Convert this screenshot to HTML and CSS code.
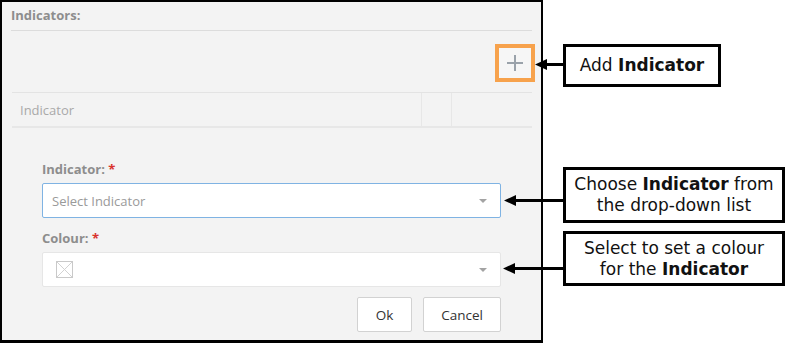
FILE: index.html
```html
<!DOCTYPE html>
<html lang="en">
<head>
  <meta charset="UTF-8" />
  <meta name="viewport" content="width=device-width, initial-scale=1.0"/>
  <title>Indicators</title>
  <link rel="stylesheet" href="styles.css">
</head>
<body>
  <div class="page">
    <!-- the dialog -->
    <section class="panel">
      <h2 class="panel-title">Indicators:</h2>

      <div class="toolbar">
        <button class="add-btn" title="Add Indicator">
          <svg width="16" height="16" viewBox="0 0 16 16">
            <path d="M8 0v16M0 8h16" stroke="#9aa2aa" stroke-width="2" fill="none"/>
          </svg>
        </button>
      </div>

      <div class="grid-head">
        <div class="col col-name">Indicator</div>
        <div class="col col-mid"></div>
        <div class="col col-end"></div>
      </div>

      <div class="indicator-form">
        <label class="field-label">Indicator: <span class="req">*</span></label>
        <div class="select focused">
          <span class="placeholder">Select Indicator</span>
          <span class="caret"></span>
        </div>

        <label class="field-label gap">Colour: <span class="req">*</span></label>
        <div class="select">
          <span class="swatch">
            <svg width="17" height="17" viewBox="0 0 17 17">
              <rect x="0.5" y="0.5" width="16" height="16" fill="#fff" stroke="#c9c9c9"/>
              <path d="M1 1l15 15M16 1L1 16" stroke="#d2d2d2" stroke-width="1"/>
            </svg>
          </span>
          <span class="caret"></span>
        </div>

        <div class="actions">
          <button class="btn btn-ok">Ok</button>
          <button class="btn btn-cancel">Cancel</button>
        </div>
      </div>
    </section>

    <!-- callouts -->
    <aside class="notes">
      <div class="note note-add">Add <b>Indicator</b></div>
      <div class="note note-choose">Choose <b>Indicator</b> from<br>the drop-down list</div>
      <div class="note note-colour">Select to set a colour<br>for the <b>Indicator</b></div>
    </aside>

    <svg class="arrows" width="787" height="343" viewBox="0 0 787 343">
      <g stroke="#000" stroke-width="3">
        <line x1="544" y1="64.5" x2="564" y2="64.5"/>
        <line x1="514" y1="200.5" x2="564" y2="200.5"/>
        <line x1="513" y1="268.5" x2="564" y2="268.5"/>
      </g>
      <g fill="#000">
        <polygon points="535,64.5 547,59 547,70"/>
        <polygon points="504,200.5 516,195 516,206"/>
        <polygon points="503,268.5 515,263 515,274"/>
      </g>
    </svg>
  </div>
</body>
</html>
```

FILE: styles.css
```css
* {
  box-sizing: border-box;
}
body {
  margin: 0;
  background: #fff;
  font-family: "Open Sans", "Noto Sans", sans-serif;
}
.page {
  position: relative;
  display: flex;
  width: 787px;
  height: 343px;
}
.panel {
  width: 543px;
  height: 343px;
  background: #f3f3f3;
  border: 2px solid #000;
  border-bottom-width: 3px;
  display: flex;
  flex-direction: column;
}
.panel-title {
  margin: 0 9px;
  padding: 4px 0 6px;
  font-size: 13px;
  line-height: 18px;
  font-weight: bold;
  color: #8d8d8d;
  border-bottom: 1px solid #dcdcdc;
}
.toolbar {
  display: flex;
  justify-content: flex-end;
  margin: 13px 6px 0 0;
}
.add-btn {
  width: 40px;
  height: 38px;
  padding: 0;
  border: 4px solid #f7a24c;
  background: #f6f6f6;
  display: flex;
  align-items: center;
  justify-content: center;
  cursor: pointer;
}
.grid-head {
  display: grid;
  grid-template-columns: 1fr 30px 81px;
  margin: 10px 9px 0 10px;
  height: 36px;
  border-top: 1px solid #e3e3e3;
  border-bottom: 2px solid #e7e7e7;
}
.col {
  display: flex;
  align-items: center;
  font-size: 13px;
  color: #a9a9a9;
}
.col-name {
  padding-left: 8px;
}
.col-mid,
.col-end {
  border-left: 1px solid #e7e7e7;
}
.indicator-form {
  padding: 32px 40px 0;
  display: flex;
  flex-direction: column;
}
.field-label {
  display: block;
  font-size: 13px;
  line-height: 18px;
  font-weight: bold;
  color: #8d8d8d;
  margin-bottom: 5px;
}
.field-label.gap {
  margin-top: 11px;
}
.req {
  color: #d9322c;
}
.select {
  position: relative;
  height: 35px;
  background: #fff;
  border: 1px solid #e6e6e6;
  border-radius: 2px;
  display: flex;
  align-items: center;
  padding-left: 9px;
}
.select.focused {
  border-color: #7fb3e3;
}
.placeholder {
  font-size: 13px;
  color: #9a9a9a;
}
.swatch {
  display: flex;
  margin-left: 4px;
}
.caret {
  margin-left: auto;
  margin-right: 13px;
  width: 0;
  height: 0;
  border-left: 4px solid transparent;
  border-right: 4px solid transparent;
  border-top: 4px solid #a3a3a3;
}
.actions {
  display: flex;
  justify-content: flex-end;
  gap: 11px;
  margin-top: 10px;
}
.btn {
  height: 35px;
  background: #fff;
  border: 1px solid #d2d2d2;
  border-radius: 2px;
  font-family: "Open Sans", sans-serif;
  font-size: 13.5px;
  color: #333;
  cursor: pointer;
}
.btn-ok {
  width: 55px;
}
.btn-cancel {
  width: 78px;
}
.notes {
  flex: 1;
  display: flex;
  flex-direction: column;
  align-items: flex-start;
  padding: 44px 0 0 20px;
}
.note {
  border: 3px solid #000;
  background: #fff;
  font-family: "DejaVu Sans", sans-serif;
  font-size: 17px;
  line-height: 21px;
  color: #111;
  text-align: center;
}
.note b {
  font-weight: bold;
}
.note-add {
  width: 158px;
  height: 43px;
  padding-top: 8px;
}
.note-choose {
  width: 222px;
  height: 56px;
  margin-top: 80px;
  padding-top: 4px;
}
.note-colour {
  width: 222px;
  height: 55px;
  margin-top: 8px;
  padding-top: 4px;
}
.arrows {
  position: absolute;
  left: 0;
  top: 0;
  pointer-events: none;
}
```
